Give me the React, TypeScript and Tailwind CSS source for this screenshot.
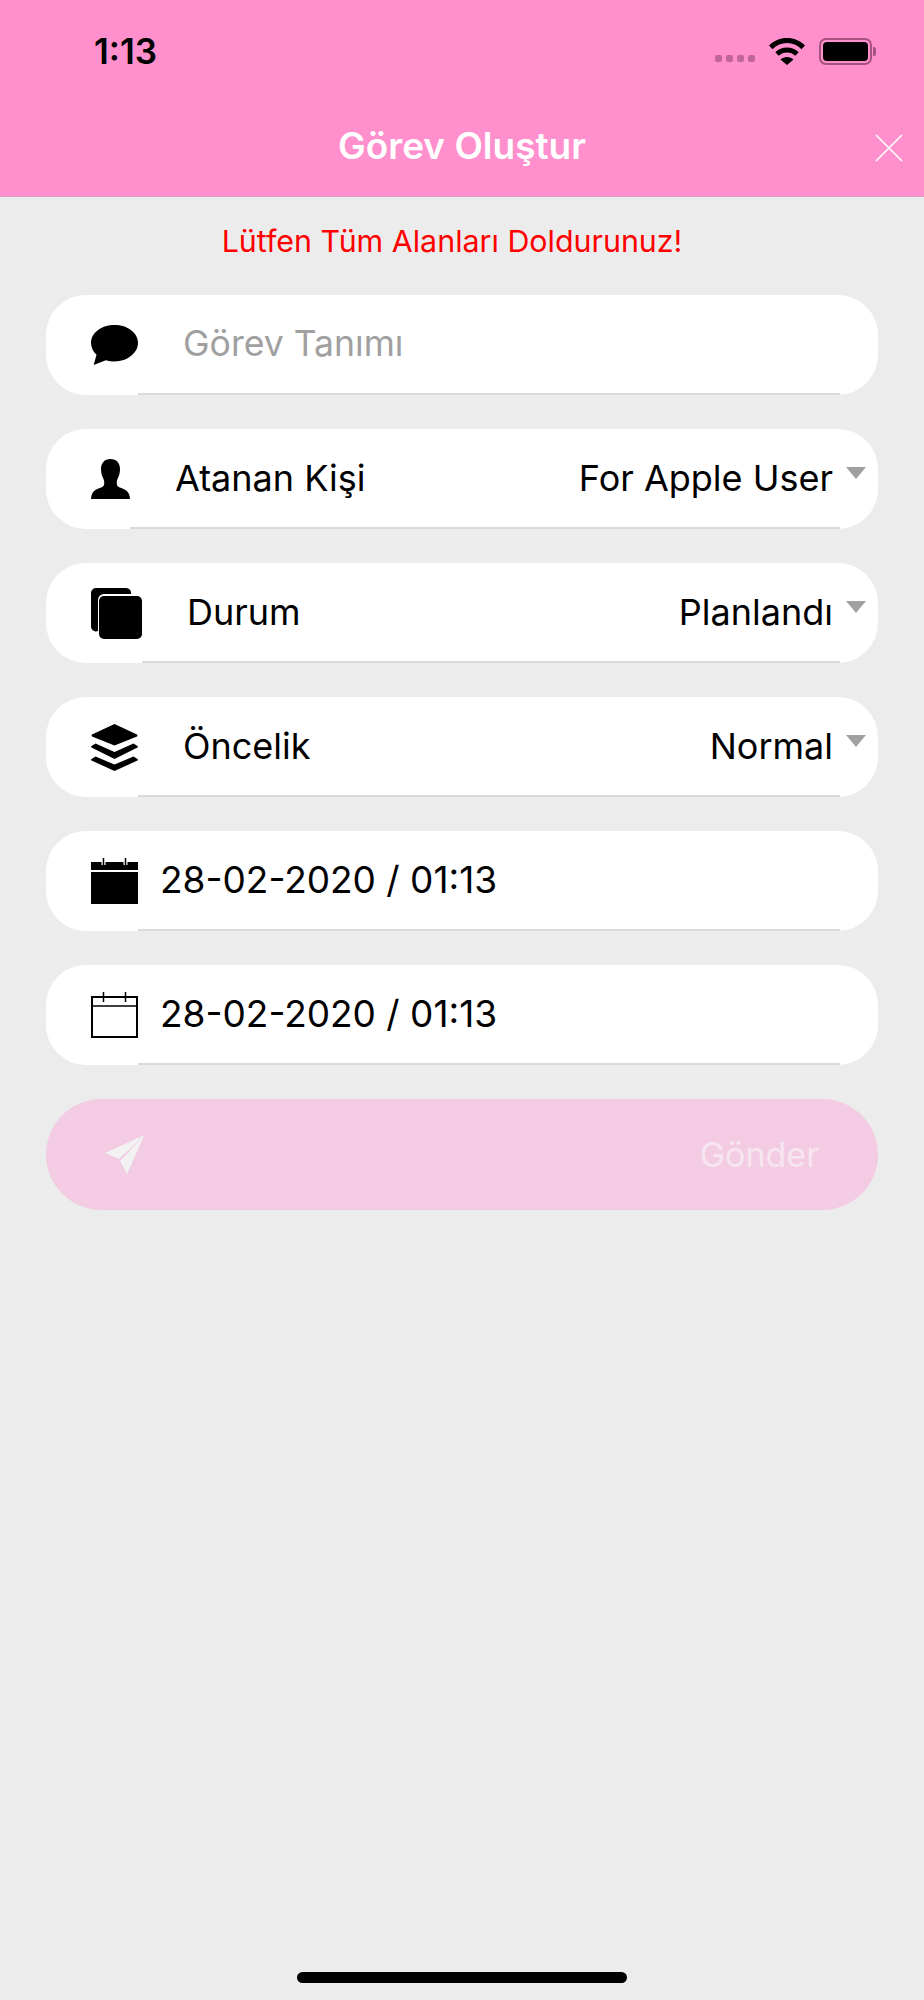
import React from "react";

const font = "[font-family:Inter,'Liberation_Sans',sans-serif]";

const ChatIcon = () => (
  <svg width="47" height="40" viewBox="0 0 47 40" className="block">
    <path d="M23.500 0C36.500 0 47 7.800 47 17.800S36.500 36.500 23.500 36.500c-3 0-6-.4-8.700-1.200L2.700 40 5.500 29.800C2 26.600 0 22.400 0 17.800 0 7.800 10.500 0 23.500 0z" fill="#000" />
  </svg>
);

const UserIcon = () => (
  <svg width="39" height="40" viewBox="0 0 39 40" className="block">
    <path d="M19.500 0c6 0 9.500 4 9.500 10 0 4-1 7-2.500 10-1 2.500-1 5 0 7 2 2 9 3 11 7 1 2 1.500 4 1.500 6H0c0-2 .5-4 1.500-6 2-4 9-5 11-7 1-2 1-4.500 0-7C11 17 10 14 10 10 10 4 13.500 0 19.500 0z" fill="#000" />
  </svg>
);

const CopyIcon = () => (
  <svg width="51" height="51" viewBox="0 0 51 51" className="block">
    <path d="M5 0h30a5 5 0 0 1 5 6H13a6 6 0 0 0-6 6v31a5 5 0 0 1-7-5V5a5 5 0 0 1 5-5z" fill="#000" />
    <rect x="8" y="8" width="43" height="43" rx="5" fill="#000" />
  </svg>
);

const LayersIcon = () => (
  <svg width="47" height="47" viewBox="0 0 47 47" className="block">
    <path d="M23.500 0 46 10.500q1 1 0 2L23.500 21.500 1 12.500q-1-1 0-2z" fill="#000" />
    <path d="M4.500 19.500 23.500 28 42.500 19.500 46.500 22q.8 1 0 1.500L23.500 35 .5 23.500q-.8-.5 0-1.500z" fill="#000" />
    <path d="M4.500 32.500 23.500 40.500 42.500 32.500 46.500 35q.8 1 0 1.500L23.500 47 .5 36.500q-.8-.5 0-1.500z" fill="#000" />
  </svg>
);

const CalendarIcon = ({ filled }: { filled?: boolean }) => (
  <svg width="47" height="46" viewBox="0 0 47 46" className="block">
    {filled ? (
      <>
        <rect x="0" y="4" width="47" height="8" fill="#000" />
        <rect x="0" y="14" width="47" height="32" fill="#000" />
        <path d="M12.500 0v7M34.500 0v7" stroke="#fff" strokeWidth="4" />
        <path d="M12.500 0v7M34.500 0v7" stroke="#000" strokeWidth="1.500" />
      </>
    ) : (
      <>
        <rect x="1" y="5" width="45" height="40" fill="none" stroke="#000" strokeWidth="2" />
        <path d="M0 14h47M12.500 0v10M34.500 0v10" stroke="#000" strokeWidth="1.500" />
      </>
    )}
  </svg>
);

const SendIcon = () => (
  <svg width="40" height="39" viewBox="0 0 40 39" className="block">
    <path d="M39.500 0 0 18l14 6z" fill="#f2f2f2" />
    <path d="M39.500 0 15 26l7 13z" fill="#f2f2f2" />
  </svg>
);

const Caret = () => (
  <span className="mb-[10px] ml-[13px] -mr-[26px] h-0 w-0 border-x-[10.500px] border-t-[12px] border-x-transparent border-t-[#a0a0a0]" />
);

type RowProps = {
  icon: React.ReactNode;
  label: string;
  labelGap: string;
  labelClass?: string;
  value?: string;
};

const Row = ({ icon, label, labelGap, labelClass = "text-[36px] text-black", value }: RowProps) => (
  <div className="flex h-[100px] items-stretch rounded-[40px] bg-white">
    <div className="flex items-center pl-[45px]">{icon}</div>
    <div className={`mr-[38px] flex flex-1 items-center border-b-2 border-[#dadada] ${labelGap}`}>
      <span className={`flex-1 ${labelClass}`}>{label}</span>
      {value && (
        <>
          <span className="text-[36px] text-black">{value}</span>
          <Caret />
        </>
      )}
    </div>
  </div>
);

export default function App() {
  return (
    <div className={`flex h-[2000px] flex-col bg-[#ececec] ${font}`}>
      <header className="h-[197px] border-b border-[#d9a0c0] bg-[#ff8fcd]">
        <div className="flex items-center justify-between pl-[94px] pr-[48px] pt-[31px]">
          <span className="text-[35px] font-semibold leading-[40px] text-black">1:13</span>
          <div className="flex items-center">
            <div className="mt-[14px] flex gap-[4px]">
              <span className="h-[7px] w-[7px] rounded-[2px] bg-[#c2659b]" />
              <span className="h-[7px] w-[7px] rounded-[2px] bg-[#c2659b]" />
              <span className="h-[7px] w-[7px] rounded-[2px] bg-[#c2659b]" />
              <span className="h-[7px] w-[7px] rounded-[2px] bg-[#c2659b]" />
            </div>
            <svg width="36" height="27" viewBox="0 0 36 27" className="ml-[14px] block">
              <path d="M18 0C11 0 5 2.600 0 7.500l3.500 3.700C7.500 7.200 12.500 5 18 5s10.500 2.200 14.500 6.200L36 7.500C31 2.600 25 0 18 0z" fill="#000" />
              <path d="M18 9.500c-4.600 0-8.700 1.800-11.700 4.700l3.400 3.600c2.200-2.100 5-3.300 8.300-3.300s6.100 1.200 8.300 3.300l3.400-3.600c-3-2.900-7.100-4.700-11.700-4.700z" fill="#000" />
              <path d="M18 19c-2.500 0-4.800 1-6.500 2.500L18 27l6.500-5.500C22.800 20 20.500 19 18 19z" fill="#000" />
            </svg>
            <div className="ml-[14px] flex items-center">
              <div className="h-[27px] w-[53px] rounded-[7px] border-2 border-[#a8537f] p-[2px]">
                <div className="h-full w-full rounded-[4px] bg-black" />
              </div>
              <span className="ml-[1px] h-[9px] w-[3px] rounded-r-[2px] bg-[#a8537f]" />
            </div>
          </div>
        </div>
        <div className="mt-[53px] grid grid-cols-[1fr_auto_1fr] items-center px-[21px]">
          <span />
          <h1 className="text-[37px] font-semibold leading-[44px] text-white">Görev Oluştur</h1>
          <svg width="28" height="28" viewBox="0 0 28 28" className="mt-[3px] justify-self-end">
            <path d="M1 1l26 26M27 1L1 27" stroke="#fff" strokeWidth="1.600" />
          </svg>
        </div>
      </header>

      <p className="mt-[26px] pr-[20px] text-center text-[30.400px] leading-[36px] text-[#ff0000]">Lütfen Tüm Alanları Doldurunuz!</p>

      <div className="mt-[36px] flex flex-col gap-[34px] px-[46px]">
        <Row icon={<ChatIcon />} label="Görev Tanımı" labelGap="pl-[45px]" labelClass="text-[35.600px] text-[#a0a0a0]" />
        <Row icon={<UserIcon />} label="Atanan Kişi" labelGap="pl-[45px]" value="For Apple User" />
        <Row icon={<CopyIcon />} label="Durum" labelGap="pl-[45px]" value="Planlandı" />
        <Row icon={<LayersIcon />} label="Öncelik" labelGap="pl-[45px]" value="Normal" />
        <Row icon={<CalendarIcon filled />} label="28-02-2020 / 01:13" labelGap="pl-[22px]" labelClass="text-[37px] text-black" />
        <Row icon={<CalendarIcon />} label="28-02-2020 / 01:13" labelGap="pl-[22px]" labelClass="text-[37px] text-black" />
        <button className="flex h-[111px] items-center justify-between rounded-full bg-[#f3cbe2] pl-[59px] pr-[59px]">
          <SendIcon />
          <span className="text-[34px] text-[#f7e6f0]">Gönder</span>
        </button>
      </div>

      <div className="mt-auto mb-[17px] flex justify-center">
        <span className="h-[11px] w-[330px] rounded-full bg-black" />
      </div>
    </div>
  );
}
